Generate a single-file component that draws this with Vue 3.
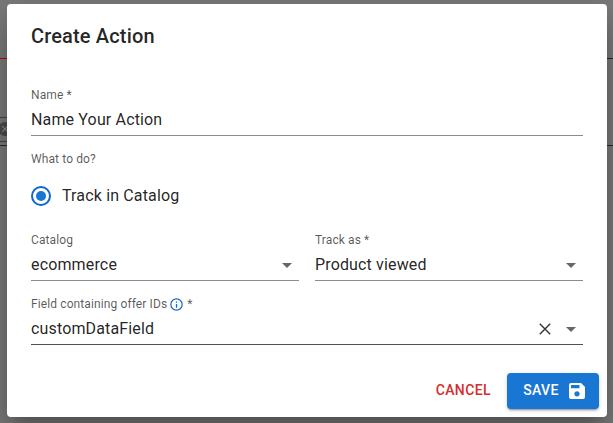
<script setup>
import { ref } from 'vue'

const name = ref('Name Your Action')
const catalog = ref('ecommerce')
const trackAs = ref('Product viewed')
const field = ref('customDataField')
</script>

<template>
  <div class="backdrop">
    <span class="edge edge-left edge-red"></span>
    <span class="edge edge-left edge-box">
      <svg class="chip" viewBox="0 0 14 14"><circle cx="7" cy="7" r="7" fill="#4c4c4c" /><path d="M4.2 4.2l5.6 5.6m0-5.6l-5.6 5.6" stroke="#8c8c8c" stroke-width="1.2" /></svg>
    </span>
    <span class="edge edge-left edge-low"></span>
    <span class="edge edge-right edge-high"></span>
    <span class="edge edge-right edge-low"></span>

    <section class="dialog" role="dialog">
      <h2 class="title">Create Action</h2>

      <div class="field">
        <div class="label">Name *</div>
        <div class="control"><span class="value">{{ name }}</span></div>
      </div>

      <div class="label question">What to do?</div>
      <div class="radio">
        <svg class="radio-icon" viewBox="0 0 20 20">
          <circle cx="10" cy="10" r="9" fill="none" stroke="#0f66d0" stroke-width="2" />
          <circle cx="10" cy="10" r="5" fill="#1976d2" />
        </svg>
        <span class="radio-text">Track in Catalog</span>
      </div>

      <div class="columns">
        <div class="field">
          <div class="label">Catalog</div>
          <div class="control">
            <span class="value">{{ catalog }}</span>
            <svg class="icon" viewBox="0 0 24 24"><path d="M7 10l5 5 5-5z" /></svg>
          </div>
        </div>
        <div class="field">
          <div class="label">Track as *</div>
          <div class="control">
            <span class="value">{{ trackAs }}</span>
            <svg class="icon" viewBox="0 0 24 24"><path d="M7 10l5 5 5-5z" /></svg>
          </div>
        </div>
      </div>

      <div class="field active last">
        <div class="label">
          <span>Field containing offer IDs</span>
          <svg class="info" viewBox="0 0 24 24"><path d="M11 9h2V7h-2m1 13c-4.41 0-8-3.59-8-8s3.59-8 8-8 8 3.59 8 8-3.59 8-8 8m0-18A10 10 0 0 0 2 12a10 10 0 0 0 10 10 10 10 0 0 0 10-10A10 10 0 0 0 12 2m-1 15h2v-6h-2v6z" /></svg>
          <span>*</span>
        </div>
        <div class="control">
          <span class="value">{{ field }}</span>
          <svg class="clear" viewBox="0 0 12 12"><path d="M.8.8l10.4 10.4M11.2.8L.8 11.2" /></svg>
          <svg class="icon" viewBox="0 0 24 24"><path d="M7 10l5 5 5-5z" /></svg>
        </div>
      </div>

      <footer class="actions">
        <button class="cancel"><span>CANCEL</span></button>
        <button class="save">
          <span>SAVE</span>
          <svg viewBox="0 0 16 16"><path fill-rule="evenodd" d="M2 0h10l4 4v10a2 2 0 0 1-2 2H2a2 2 0 0 1-2-2V2a2 2 0 0 1 2-2zm0 2v3.2h8.5V2zm6 6.2a2.6 2.6 0 1 0 0 5.2 2.6 2.6 0 0 0 0-5.2z" /></svg>
        </button>
      </footer>
    </section>
  </div>
</template>

<style>
body {
  overflow: hidden;
}
</style>

<style scoped>
.backdrop {
  position: relative;
  box-sizing: border-box;
  width: 613px;
  height: 423px;
  padding: 4px 6px 6px 7px;
  overflow: hidden;
  background: #7b7b7b;
  font-family: Roboto, "Liberation Sans", sans-serif;
  color: rgba(0, 0, 0, 0.87);
}
.edge {
  position: absolute;
  box-sizing: border-box;
  height: 1px;
  background: #2a2a2a;
}
.edge-left { left: 0; width: 7px; }
.edge-right { right: 0; width: 6px; }
.edge-red { top: 58px; background: #c00000; }
.edge-high { top: 58px; }
.edge-low { top: 145px; }
.edge-box {
  top: 117px;
  height: 25px;
  border: solid #444;
  border-width: 1px 0;
  background: none;
  overflow: hidden;
}
.chip {
  display: block;
  width: 14px;
  height: 14px;
  margin: 4px 0 0 -2px;
}
.dialog {
  position: relative;
  box-sizing: border-box;
  width: 600px;
  height: 413px;
  padding: 16px 24px 8px;
  border-radius: 4px;
  background: #fff;
  box-shadow: 0 11px 15px -7px rgba(0, 0, 0, 0.2), 0 24px 38px 3px rgba(0, 0, 0, 0.14), 0 9px 46px 8px rgba(0, 0, 0, 0.12);
}
.title {
  margin: 0 0 35px;
  font-size: 20px;
  line-height: 32px;
  font-weight: 500;
  letter-spacing: 0.15px;
}
.label {
  display: flex;
  align-items: center;
  gap: 2px;
  height: 16px;
  font-size: 12px;
  line-height: 16px;
  letter-spacing: 0.11px;
  color: rgba(0, 0, 0, 0.66);
}
.control {
  display: flex;
  align-items: center;
  box-sizing: border-box;
  height: 33px;
  padding-top: 2px;
  border-bottom: 1px solid #8c8c8c;
}
.active .control { border-color: #505050; }
.value {
  flex: 1;
  font-size: 16px;
  line-height: 30px;
  letter-spacing: 0.15px;
}
.icon {
  width: 24px;
  height: 24px;
  fill: #666;
}
.clear {
  width: 12px;
  height: 12px;
  margin-right: 8px;
  fill: none;
  stroke: #333;
  stroke-width: 1.4;
}
.info {
  width: 15px;
  height: 15px;
  margin-right: 1px;
  fill: #0f66d0;
}
.question { margin-top: 15px; }
.radio {
  display: flex;
  align-items: center;
  gap: 11px;
  height: 40px;
  margin: 9px 0 16px;
}
.radio-icon {
  width: 20px;
  height: 20px;
}
.radio-text {
  padding-bottom: 2px;
  font-size: 16px;
  letter-spacing: 0.15px;
}
.columns {
  display: grid;
  grid-template-columns: 1fr 1fr;
  gap: 16px;
}
.last { margin-top: 15px; }
.actions {
  display: flex;
  justify-content: flex-end;
  gap: 8px;
  margin: 28px -16px 0 0;
}
button {
  display: flex;
  align-items: center;
  justify-content: center;
  box-sizing: border-box;
  height: 36px;
  margin: 0;
  padding: 0 8px;
  border: 0;
  border-radius: 4px;
  background: none;
  font-family: inherit;
  font-size: 14px;
  font-weight: 500;
  letter-spacing: 0.4px;
}
button span { padding-bottom: 2px; }
.cancel { color: #d32f2f; }
.save {
  width: 92px;
  padding: 0 7px 0 9px;
  gap: 10px;
  background: #1976d2;
  color: #fff;
  box-shadow: 0 3px 1px -2px rgba(0, 0, 0, 0.2), 0 2px 2px rgba(0, 0, 0, 0.14), 0 1px 5px rgba(0, 0, 0, 0.12);
}
.save svg {
  width: 16px;
  height: 16px;
  fill: #fff;
}
</style>
